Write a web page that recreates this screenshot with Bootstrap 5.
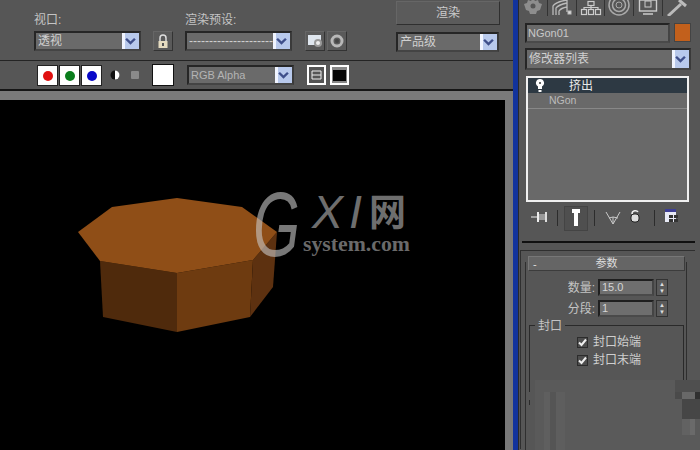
<!DOCTYPE html>
<html lang="zh"><head><meta charset="utf-8">
<link href="https://cdn.jsdelivr.net/npm/bootstrap@5.3.0/dist/css/bootstrap.min.css" rel="stylesheet">
<style>
html,body{margin:0;width:700px;height:450px;overflow:hidden;background:#565656}
body,.ui{font-family:"Liberation Sans","Noto Sans CJK SC",sans-serif;font-size:12px;color:#c4c4c4;line-height:1}
.shell{width:700px;height:450px}
.leftcol{width:513px;flex:none}
.bar1{height:61px;border-bottom:1px solid #242424;padding:14px 0 0 34px}
.bar2{height:30px;border-bottom:2px solid #161616;padding:4px 0 0 37px}
.band{height:9px;background:#7a7a7a;flex:none}
.viewrow{flex:1;min-height:0;background:#757575}
.view3d{width:505px;height:350px;background:#000;display:block;flex:none}
.gap3d{width:8px;background:#787878}
.bluebar{width:6px;flex:none;background:#12339c;border-right:1px solid #2a2a2a}
.rightcol{flex:1;padding:0 9px 0 6px;min-width:0;position:relative}
.lbl{height:14px;font-size:12px;margin-bottom:3px;white-space:nowrap}
.ddl{height:20px;background:#6a6a6a;border:2px solid #262626;border-right-color:#3a3a3a;border-bottom-color:#444;display:flex;align-items:center;padding-left:2px;color:#d0d0d0;position:relative;white-space:nowrap;overflow:hidden}
.ddlbtn{position:absolute;right:0;top:0;bottom:0;width:17px;background:linear-gradient(90deg,#f0f4ff 0 3px,#b8c9ec 3px);display:flex;align-items:center;justify-content:center}
.w107{width:107px}.w107b{width:107px}.w106{width:103px}
.iconbtn{width:20px;height:20px;border:1px solid #333;border-left-color:#666;border-top-color:#666;display:flex;align-items:center;justify-content:center;background:#5a5a5a;flex:none}
.rcb{width:21px;height:21px;background:#fff;border:1px solid #222;display:flex;align-items:center;justify-content:center;margin-right:1px;flex:none}
.rcb i{width:10px;height:10px;border-radius:50%;display:block}
.wbox{width:22px;height:22px;background:#fff;border:1px solid #111;margin-top:-1px;flex:none}
.renderbtn{width:104px;height:24px;border:1px solid #2f2f2f;border-top-color:#666;border-left-color:#666;display:flex;align-items:center;justify-content:center;color:#ccc;font-size:12px;background:#5b5b5b}
.tabs{height:16px;overflow:hidden;margin-left:-6px}
.tabi{flex:1;border-right:1px solid #333;display:flex;justify-content:center;align-items:flex-end;overflow:hidden}
.nameinp{width:145px;height:20px;background:#6a6a6a;border:2px solid #242424;border-right-color:#444;border-bottom-color:#4a4a4a;padding-left:1px;display:flex;align-items:center;color:#c8c8c8;font-size:11px}
.swatch{width:17px;height:19px;background:#c2601c;border:1px solid #444}
.mlist{height:126px;margin:6px 2px 0 1px;border:2px solid #f0f0f0;background:#696969}
.mrow{height:16px;border-bottom:1px solid #888;display:flex;align-items:center;position:relative}
.mrow.sel{background:#2d3943;color:#e8e8e8;height:15px;border-bottom:0;padding-left:41px}
.mrow.base{padding-left:21px;font-size:10.5px;color:#bbb}
.stackicons{height:39px;padding:4px 0 0 0;margin-left:-1px}
.stackicons svg{flex:none}
.sep{width:1px;height:16px;background:#2c2c2c;flex:none}
.heavy{height:2px;background:#111;margin:0 -4px 0 -3px}
.rollout{margin:7px -4px 0 -5px;border-top:1px solid #2f2f2f;border-left:1px solid #2f2f2f;padding:0 8px 0 4px;height:199px}
.rollin{margin-top:11px;border:1px solid #2f2f2f;border-bottom:0;border-top:0;height:188px;padding:0 1px 0 2px}
.rollhead{height:15px;background:#656565;border:1px solid #777;border-color:#777 #3c3c3c #3c3c3c #777;display:flex;align-items:center;justify-content:center;position:relative;color:#ddd;font-size:11px;top:-6px}
.minus{position:absolute;left:4px;top:2px}
.spinrow{height:21px;justify-content:flex-end;padding-right:17px;gap:3px;align-items:center;font-size:12px}
.spinval{width:56px;height:17px;background:#6e6e6e;border:2px solid #1f1f1f;border-right-color:#444;border-bottom-color:#4a4a4a;font-size:11px;padding-left:2px;display:flex;align-items:center;color:#d4d4d4}
.spinner{width:12px;height:17px;border:1px solid #333;background:#5a5a5a;display:flex;flex-direction:column;align-items:center;justify-content:space-around;font-size:6px;color:#ddd;margin-left:-1px}
.capgroup{border:1px solid #2a2a2a;border-bottom:0;margin:6px 1px 0 1px;height:80px;position:relative;padding:7px 0 0 47px}
.caplabel{position:absolute;left:5px;top:-6px;background:#565656;padding:0 3px;font-size:12px}
.chkrow{height:18px;gap:5px;align-items:center;color:#cfcfcf;font-size:12px}
.chk{width:11px;height:11px;background:#4d4d4d;border:1px solid #2c2c2c;color:#eee;display:flex;align-items:center;justify-content:center}
.mosaic{position:absolute;left:16px;top:380px;right:0;bottom:0;background:#5a5a5a}
.mosaic div{position:absolute}
.mosaic .m0{right:0;top:0;width:25px;height:12px;background:#4f4f4f}
.mosaic .m2{right:0;top:12px;width:25px;height:7px;background:linear-gradient(90deg,#4a4a4a 0 7px,#686868 7px 20px,#303030 20px)}
.mosaic .m3{right:0;top:19px;width:18px;height:20px;background:#464646}
.mosaic .m4{right:0;top:39px;width:18px;height:16px;background:linear-gradient(90deg,#626262 0 8px,#6a6a6a 8px 13px,#5a5a5a 13px)}
.mosaic .m5{left:9px;top:12px;width:21px;height:58px;background:linear-gradient(90deg,#5f5f5f 0 6px,#555 6px 12px,#5e5e5e 12px)}
.mosaic .m6{left:-8px;top:12px;width:8px;height:8px;background:#565656}
</style></head>
<body class="ui">
<svg width="0" height="0" class="position-absolute"><defs><symbol id="chev" viewBox="0 0 10 8"><path d="M1 1.500 5 5.500 9 1.500" fill="none" stroke="#3f4f8a" stroke-width="2.200"/></symbol></defs></svg>
<div class="shell d-flex">
  <div class="leftcol d-flex flex-column">
    <div class="bar1 d-flex">
      <div><div class="lbl">视口:</div><div class="ddl w107">透视<span class="ddlbtn"><svg width="11" height="9"><use href="#chev"/></svg></span></div></div>
      <div class="iconbtn" style="margin:17px 0 0 12px"><svg width="14" height="15" viewBox="0 0 14 15"><path d="M4 7V4a3 3 0 0 1 6 0v3" fill="none" stroke="#ddd" stroke-width="1.500"/><rect x="2.500" y="7" width="9" height="7" fill="#e6dcc0"/><rect x="6" y="9" width="2" height="3" fill="#555"/></svg></div>
      <div style="margin-left:12px"><div class="lbl">渲染预设:</div><div class="ddl w107b"><span class="flex-grow-1 text-nowrap">---------------------</span><span class="ddlbtn"><svg width="11" height="9"><use href="#chev"/></svg></span></div></div>
      <div class="iconbtn" style="margin:17px 0 0 13px"><svg width="16" height="14" viewBox="0 0 16 14"><rect x="1" y="1" width="13" height="10" fill="#dfe6ee"/><circle cx="11" cy="9" r="4" fill="#9a9a9a"/><circle cx="11" cy="9" r="2" fill="#eee"/></svg></div>
      <div class="iconbtn" style="margin:17px 0 0 2px"><svg width="14" height="14"><circle cx="7" cy="7" r="5" fill="none" stroke="#b8b8b8" stroke-width="3"/><circle cx="7" cy="7" r="2" fill="#444"/></svg></div>
      <div style="margin-left:49px;margin-top:-13px"><div class="renderbtn">渲染</div><div class="ddl w106" style="margin-top:7px">产品级<span class="ddlbtn"><svg width="11" height="9"><use href="#chev"/></svg></span></div></div>
    </div>
    <div class="bar2 d-flex align-items-start">
      <div class="rcb"><i style="background:#e01010"></i></div>
      <div class="rcb"><i style="background:#0a7d1c"></i></div>
      <div class="rcb"><i style="background:#0808c8"></i></div>
      <svg width="14" height="20" viewBox="0 0 14 20" style="margin-left:5px;flex:none"><circle cx="7" cy="10" r="4.500" fill="#111"/><path d="M7 5.500a4.500 4.500 0 0 1 0 9z" fill="#fff"/></svg>
      <svg width="14" height="20" viewBox="0 0 14 20" style="margin-left:6px;flex:none"><rect x="3" y="6" width="8" height="8" rx="1" fill="#8a8a8a"/></svg>
      <div class="wbox" style="margin-left:10px"></div>
      <div class="ddl" style="width:107px;margin-left:13px;color:#b4b4b4;font-size:11px;flex:none">RGB Alpha<span class="ddlbtn"><svg width="11" height="9"><use href="#chev"/></svg></span></div>
      <svg width="19" height="20" viewBox="0 0 19 20" style="margin-left:13px;flex:none"><rect x="1" y="1" width="17" height="18" fill="#555" stroke="#fff" stroke-width="2"/><path d="M5 6h9v8H5zM5 10h9" fill="none" stroke="#eee"/></svg>
      <svg width="19" height="20" viewBox="0 0 19 20" style="margin-left:4px;flex:none"><rect x="1" y="1" width="17" height="18" fill="#888" stroke="#fff" stroke-width="2"/><rect x="3" y="5" width="13" height="11" fill="#050505"/></svg>
    </div>
    <div class="band"></div>
    <div class="viewrow d-flex">
      <svg class="view3d" viewBox="0 100 505 350" xmlns="http://www.w3.org/2000/svg">
        <polygon points="100,261 177,273 177,332 103,317" fill="#4f2a0c"/>
        <polygon points="177,273 253,260 250,317 177,332" fill="#6e3b10"/>
        <polygon points="253,260 277,232 273,287 250,317" fill="#5d3110"/>
        <polygon points="78,232 112,207 177,198 242,207 277,232 253,260 177,273 100,261" fill="#8f4e17"/>
        <g font-family="'Liberation Sans','Noto Sans CJK SC',sans-serif">
          <text x="253" y="256" font-size="90" font-style="italic" fill="#c8c8c8" opacity=".6" textLength="47" lengthAdjust="spacingAndGlyphs">G</text>
          <text x="312" y="228" font-size="46" font-style="italic" fill="#6e6e6e" textLength="31" lengthAdjust="spacingAndGlyphs">X</text>
          <text x="349" y="228" font-size="46" font-style="italic" fill="#6e6e6e" textLength="13" lengthAdjust="spacingAndGlyphs">I</text>
          <text x="369" y="226" font-size="37" font-weight="bold" fill="#6e6e6e">网</text>
          <text x="303" y="251" font-size="20" font-weight="bold" font-family="'Liberation Serif',serif" fill="#6a6a6a" textLength="107" lengthAdjust="spacingAndGlyphs">system.com</text>
        </g>
      </svg>
      <div class="gap3d"></div>
    </div>
  </div>
  <div class="bluebar"></div>
  <div class="rightcol">
    <div class="tabs d-flex">
      <div class="tabi"><svg width="20" height="16"><path d="M10 -2l2 3 3-1 1 3 3 1-1 3-1 3-3 1-1 3h-6l-1-3-3-1-1-3-1-3 3-1 1-3 3 1z" fill="#8d8d8d"/><circle cx="10" cy="6" r="2.500" fill="#555"/></svg></div>
      <div class="tabi"><svg width="22" height="16" fill="none" stroke="#bbb"><path d="M2 15V6Q4 2 16 0M5 15V8Q7 5 16 3M8 15V11Q10 8 16 7M16 0V12" stroke-width="1.300"/><rect x="17" y="11" width="3" height="3" fill="#ddd"/></svg></div>
      <div class="tabi"><svg width="22" height="16" fill="none" stroke="#ccc" stroke-width="1.200"><rect x="8" y="1.500" width="6" height="4"/><rect x="1.500" y="9.500" width="5" height="5"/><rect x="8.500" y="9.500" width="5" height="5"/><rect x="15.500" y="9.500" width="5" height="5"/><path d="M11 5V9M4 9V7.500H18V9"/></svg></div>
      <div class="tabi"><svg width="24" height="16" fill="none" stroke="#aaa"><circle cx="12" cy="5" r="3"/><circle cx="12" cy="5" r="6.500" stroke-width="1.500"/><circle cx="12" cy="5" r="10" stroke-width="1.500"/></svg></div>
      <div class="tabi"><svg width="22" height="16" fill="none" stroke="#ccc"><rect x="2.500" y="0" width="17" height="11" stroke-width="1.400"/><rect x="8" y="1" width="6" height="6"/><path d="M6 14H16" stroke-width="1.500"/></svg></div>
      <div class="tabi border-0"><svg width="22" height="16" fill="none" stroke="#bbb" stroke-width="3"><path d="M2 16 15 4"/><path d="M13 0 20 6" stroke-width="3"/></svg></div>
    </div>
    <div class="d-flex justify-content-between" style="margin-top:7px">
      <div class="nameinp">NGon01</div><div class="swatch"></div>
    </div>
    <div class="ddl" style="height:22px;margin-top:5px;font-size:12px">修改器列表<span class="ddlbtn"><svg width="11" height="9"><use href="#chev"/></svg></span></div>
    <div class="mlist">
      <div class="mrow sel"><svg width="10" height="13" viewBox="0 0 10 13" class="position-absolute" style="left:7px;top:1px"><path d="M5 0a4 4 0 0 1 2 7.500V10H3V7.500A4 4 0 0 1 5 0z" fill="#fff"/><rect x="3.500" y="11" width="3" height="2" fill="#fff"/><circle cx="5" cy="4" r="1" fill="#333"/></svg>挤出</div>
      <div class="mrow base">NGon</div>
    </div>
    <div class="stackicons d-flex align-items-start">
      <svg width="17" height="14" viewBox="0 0 17 14" style="margin:4px 0 0 7px"><path d="M0 7h6" stroke="#eee"/><rect x="6" y="2" width="2" height="10" fill="#eee"/><rect x="8" y="4" width="6" height="6" fill="#999"/><rect x="14" y="2" width="2" height="10" fill="#ddd"/></svg>
      <div class="sep" style="margin:4px 0 0 9px"></div>
      <svg width="24" height="25" viewBox="0 0 24 25" style="margin-left:6px"><rect x=".5" y=".5" width="23" height="24" fill="#4f4f4f" stroke="#444"/><path d="M8 5h8M12 5v15" stroke="#fff" stroke-width="4"/></svg>
      <div class="sep" style="margin:4px 0 0 6px"></div>
      <svg width="16" height="16" viewBox="0 0 16 16" fill="none" stroke="#c8c8c8" style="margin:4px 0 0 10px"><path d="M1 2 8 14 15 2M8 14V7M4 8l4-1 5 1"/></svg>
      <svg width="10" height="14" viewBox="0 0 10 14" style="margin:3px 0 0 9px"><rect x="1" y="5" width="8" height="8" rx="3" fill="#ddd" stroke="#222"/><path d="M2 5C2 1 7 1 8 3" fill="none" stroke="#eee" stroke-width="1.500"/></svg>
      <div class="sep" style="margin:4px 0 0 14px"></div>
      <svg width="16" height="15" viewBox="0 0 16 15" style="margin:3px 0 0 9px"><rect x="1" y="0" width="11" height="13" fill="#e8eaf6"/><rect x="1" y="0" width="11" height="3" fill="#3e3f95"/><rect x="5" y="6" width="4" height="3" fill="#333"/><rect x="10" y="6" width="4" height="3" fill="#333"/><rect x="5" y="10" width="4" height="3" fill="#333"/><rect x="10" y="10" width="4" height="3" fill="#333"/></svg>
    </div>
    <div class="heavy"></div>
    <div class="rollout">
      <div class="rollin">
      <div class="rollhead"><span class="minus">-</span>参数</div>
      <div class="spinrow d-flex">数量:<div class="spinval">15.0</div><div class="spinner"><span>▲</span><span>▼</span></div></div>
      <div class="spinrow d-flex">分段:<div class="spinval">1</div><div class="spinner"><span>▲</span><span>▼</span></div></div>
      <div class="capgroup">
        <span class="caplabel">封口</span>
        <div class="chkrow d-flex"><span class="chk"><svg width="9" height="9"><path d="M1 4.500 3.500 7 8 1.500" fill="none" stroke="#eee" stroke-width="2"/></svg></span>封口始端</div>
        <div class="chkrow d-flex"><span class="chk"><svg width="9" height="9"><path d="M1 4.500 3.500 7 8 1.500" fill="none" stroke="#eee" stroke-width="2"/></svg></span>封口末端</div>
      </div>
      </div>
    </div>
    <div class="mosaic"><div class="m0"></div><div class="m2"></div><div class="m3"></div><div class="m4"></div><div class="m5"></div><div class="m6"></div></div>
  </div>
</div>
</body></html>
